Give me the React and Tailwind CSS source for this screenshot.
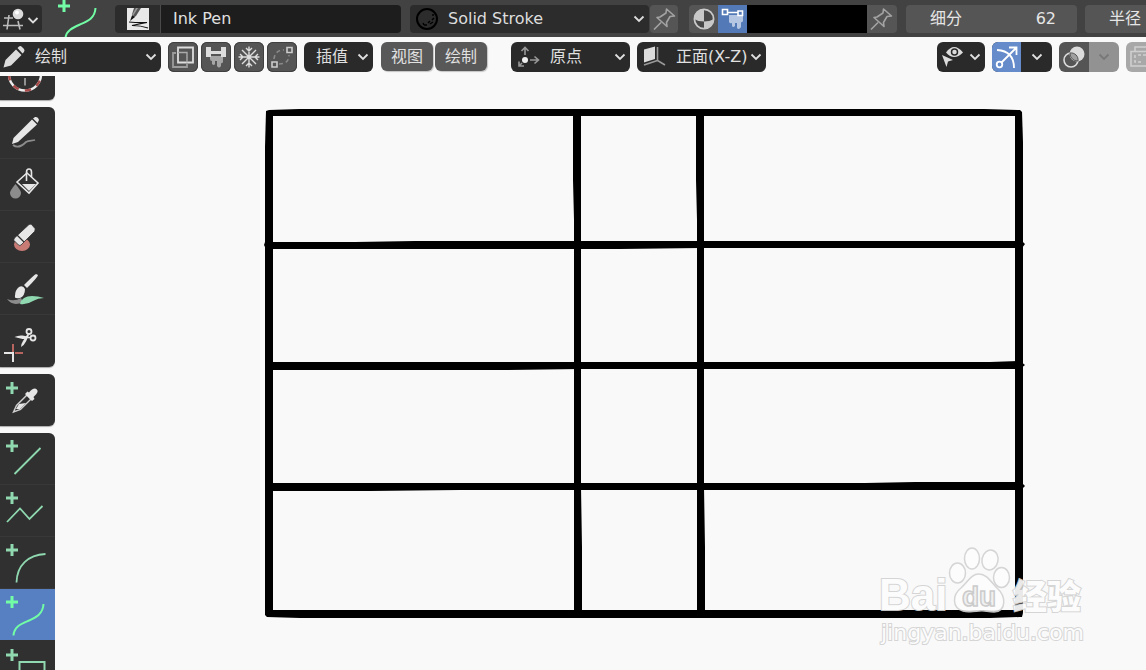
import { useState } from "react";

// SHARED ICONS

const Chevron = ({ className = "" }) => (
  <svg
    width="12"
    height="8"
    viewBox="0 0 12 8"
    fill="none"
    stroke="currentColor"
    strokeWidth="1.8"
    className={`shrink-0 pointer-events-none ${className}`}
  >
    <path d="M1.5 1.5 6 6l4.5-4.5" />
  </svg>
);

const Pin = () => (
  <svg width="28" height="28" viewBox="0 0 28 28" fill="none" stroke="#a3a3a3" strokeWidth="1.6" strokeLinejoin="round">
    <path d="M4 24.500l7-7M7 12.500l3-.5 6-4 .5-4 8 7-4.500.5-3.500 6 .5 4z" />
  </svg>
);

const Plus = () => <path d="M6 13h12M12 7v12" strokeWidth="3" />;

// TOOLBAR GROUPS

const toolGroups = [
  [
    {
      id: "cursor",
      label: "游标",
      art: (
        <g fill="none">
          <circle cx="25" cy="25.500" r="16" stroke="#eee" strokeWidth="2.400" />
          <circle cx="25" cy="25.500" r="16" stroke="#a84a4a" strokeWidth="2.400" strokeDasharray="6.280 6.280" strokeDashoffset="6.280" />
          <path d="M25 29v7.500" stroke="#aaa" strokeWidth="1.600" />
        </g>
      ),
    },
  ],
  [
    {
      id: "draw",
      label: "绘制",
      art: (
        <g>
          <path d="M12 37l1.500-6L32 12.500l5 5L18 35z" fill="#e6e6e6" />
          <path d="M33 11.500l2-1.500q3-.5 4 3l-1.500 3z" fill="#e6e6e6" />
          <path d="M13 38c5 4 10 0 13-3 3-2 6-1 9-2" fill="none" stroke="#8c8c8c" strokeWidth="1.800" />
        </g>
      ),
    },
    {
      id: "fill",
      label: "填充",
      art: (
        <g fill="none" stroke="#e6e6e6" strokeWidth="1.600">
          <path d="M17 23l10-9 11 10-9 10z" />
          <path d="M26.500 22V13q0-3 2.500-3t2.500 3v5" />
          <path d="M22 25h14l-7 7z" fill="#e6e6e6" stroke="none" />
          <path d="M15.500 25q5.500 6.500 5.500 9a5.500 5.500 0 0 1-11 0q0-2.500 5.500-9z" fill="#8c8c8c" stroke="none" />
        </g>
      ),
    },
    {
      id: "erase",
      label: "擦除",
      art: (
        <g>
          <ellipse cx="22" cy="33.500" rx="8" ry="6.500" fill="#c87b74" />
          <path d="M28.500 14q1.500-1.500 3-.5l3.500 4q.5 1.500-.5 3L21 34q-1 1-2.500 0L14 29.500q-.5-1.500.5-2.500z" fill="#e6e6e6" stroke="#303030" strokeWidth=".8" />
          <path d="M17 24l7 7" stroke="#303030" strokeWidth="1.300" />
        </g>
      ),
    },
    {
      id: "tint",
      label: "着色",
      art: (
        <g>
          <path d="M7 36q6 8 16 3l-2-4q-7 4-14 1z" fill="#8c8c8c" />
          <path d="M20 41q2-8 12-8 6 0 12 2-6 0-11 3-6 4-13 3z" fill="#8fd8b0" />
          <path d="M36 11l2 1q0 2-11 13l-3-3q10-10 12-11z" fill="#e6e6e6" />
          <path d="M19 24q4-2 6 2 0 7-5 9-6 1-5-2 0-6 4-9z" fill="#e6e6e6" />
        </g>
      ),
    },
    {
      id: "cutter",
      label: "剪切",
      art: (
        <g fill="none" strokeWidth="2">
          <circle cx="29" cy="15.500" r="2.500" stroke="#e6e6e6" strokeWidth="1.800" />
          <circle cx="33" cy="22" r="2.500" stroke="#e6e6e6" strokeWidth="1.800" />
          <path d="M14.500 21q4-2 8-1.500l8 1.500v1l-8 1-8-2zM21 31q0-3 2-6l4.500-7 1.500 1-3 6.500q-2 4-5 5.500z" fill="#e6e6e6" />
          <path d="M13 28v8M15 37h8" stroke="#b9655f" />
          <path d="M4 37h10M13 37v9" stroke="#e6e6e6" />
        </g>
      ),
    },
  ],
  [
    {
      id: "eyedropper",
      label: "吸管",
      art: (
        <g stroke="#8fd8b0">
          <Plus />
          <path d="M13.500 37l3-6.500L27 20l4 4-10.500 10.500z" fill="none" stroke="#d0d0d0" strokeWidth="1.400" />
          <path d="M16 34l3-5 7-1-6 6z" fill="#e6e6e6" stroke="none" />
          <path d="M25 19l2.500-2.500 1.500 1q3-4 6-4 3 1 2.500 3.500-.5 2-4 5l1 2-2.500 2z" fill="#e6e6e6" stroke="none" />
        </g>
      ),
    },
  ],
  [
    {
      id: "line",
      label: "直线",
      art: (
        <g fill="none" stroke="#8fd8b0" strokeWidth="1.800">
          <Plus />
          <path d="M14.500 41L40.500 15" />
        </g>
      ),
    },
    {
      id: "polyline",
      label: "多段线",
      art: (
        <g fill="none" stroke="#8fd8b0" strokeWidth="1.800">
          <Plus />
          <path d="M7 37l13-13.500L29.500 34l13-13" />
        </g>
      ),
    },
    {
      id: "arc",
      label: "弧线",
      art: (
        <g fill="none" stroke="#8fd8b0" strokeWidth="1.800">
          <Plus />
          <path d="M16.500 45.500C17 28 28 18 45.500 17" />
        </g>
      ),
    },
    {
      id: "curve",
      label: "曲线",
      art: (
        <g fill="none" stroke="#72fca5" strokeWidth="2">
          <Plus />
          <path d="M13.500 46.500C14 38 20 35.500 28 32S43 25 43.500 15" />
        </g>
      ),
    },
    {
      id: "box",
      label: "方框",
      art: (
        <g fill="none" stroke="#8fd8b0" strokeWidth="2">
          <Plus />
          <path d="M19.500 20h25v20h-25z" />
        </g>
      ),
    },
  ],
];

// TOP BAR (BRUSH + MATERIAL SETTINGS)

const TopBar = () => (
  <div className="flex h-[37px] shrink-0 items-center overflow-hidden bg-[#424242]">
    <button aria-label="编辑器类型" className="h-7 w-[42px] shrink-0 rounded-r bg-[#2c2c2c]">
      <svg width="42" height="28" viewBox="0 0 42 28" fill="none">
        <path d="M4 13h9M3 20.500h20M9 10L7 24.500M18 16l2 8.500" stroke="#bbb" strokeWidth="1.600" />
        <circle cx="18" cy="9" r="5.300" fill="#dcdcdc" />
        <circle cx="17" cy="7.500" r="2" fill="#fff" />
        <path d="M28.500 13l4.500 4.500 4.500-4.500" stroke="#ddd" strokeWidth="1.800" />
      </svg>
    </button>

    <svg width="40" height="37" viewBox="0 0 40 37" fill="none" stroke="#72fca5" className="ml-4 mr-[17px] shrink-0">
      <path d="M0 6h12M6 0v12" strokeWidth="3" />
      <path d="M7.500 38C8 31 14 28 22 24.500S37 18 37.500 8" strokeWidth="2" />
    </svg>

    <div className="flex h-7 shrink-0 overflow-hidden rounded">
      <button aria-label="笔刷" className="flex w-[46px] items-center justify-center border-r border-[#4a4a4a] bg-[#2c2c2c]">
        <svg width="22" height="22" viewBox="0 0 22 22">
          <path fill="#e9e9e9" d="M0 0h22v22H0z" />
          <path d="M7 0h7L9 8l-4 2.500 0-4z" fill="#555" />
          <path d="M9 0h2L6 8l-1-1z" fill="#999" />
          <path d="M3 13l2-5.500L8 9z" fill="#111" />
          <path d="M2 14q9 1 18 .5Q12 16 5 17.500q9 0 16 2.500" fill="none" stroke="#111" strokeWidth="1.200" />
        </svg>
      </button>
      <input
        aria-label="笔刷名称"
        defaultValue="Ink Pen"
        className="w-[240px] bg-[#1d1d1d] pl-3 text-[#e0e0e0] outline-none"
      />
    </div>

    <label className="ml-[9px] flex h-7 w-[239px] shrink-0 items-center rounded bg-[#2c2c2c] pl-1.5 pr-1 text-[#ddd]">
      <svg width="22" height="22" viewBox="0 0 22 22" fill="none" stroke="#000" className="shrink-0">
        <circle cx="11" cy="11" r="10" strokeWidth="2" />
        <path d="M17 6v2M18 10l-2 2M14 13l-2 2M17 14l-3 2M11 17l-3 0M7 15l1 2" strokeWidth="1.500" />
      </svg>
      <select aria-label="材质" className="ml-[10px] min-w-0 flex-1 appearance-none bg-transparent outline-none">
        <option>Solid Stroke</option>
      </select>
      <Chevron />
    </label>
    <button aria-label="固定材质" className="ml-px h-7 w-7 shrink-0 rounded bg-[#555]">
      <Pin />
    </button>

    <div className="ml-[11px] flex h-7 shrink-0 overflow-hidden rounded">
      <button aria-label="材质颜色" className="flex w-[29px] items-center justify-center bg-[#555]">
        <svg width="22" height="22" viewBox="0 0 22 22">
          <circle cx="11" cy="11" r="9.600" fill="#484848" stroke="#c8c8c8" strokeWidth="1.800" />
          <path d="M11 1v12.500Q5 13.500 1 11A10 10 0 0 1 11 1z" fill="#c8c8c8" />
          <path d="M11 13.500q5.500 0 10-2.500A10 10 0 0 1 11 21z" fill="#c8c8c8" />
        </svg>
      </button>
      <button aria-label="顶点色" className="w-[29px] bg-[#537ab6]">
        <svg width="29" height="28" viewBox="0 0 29 28" fill="none">
          <path d="M11 10h14v6q-1 2-2 1v5q-2 3.500-4 1v-5h-2v3q-2 2-3 0v-3q-2 1-3-1z" fill="#b5c6e2" />
          <path d="M9 7.500h11" stroke="#fff" strokeWidth="1.600" />
          <path d="M4.500 4.500h5v5h-5zM20 6h4.500v4.500H20z" fill="#537ab6" stroke="#fff" strokeWidth="1.600" />
        </svg>
      </button>
      <button aria-label="颜色" className="w-[120px] bg-black" />
      <button aria-label="固定颜色" className="w-[30px] bg-[#555]">
        <Pin />
      </button>
    </div>

    <label className="ml-[9px] flex h-7 w-[171px] shrink-0 items-center rounded bg-[#555] pl-6 pr-[21px] text-[#e6e6e6]">
      <span className="shrink-0">细分</span>
      <input defaultValue="62" className="min-w-0 flex-1 bg-transparent text-right outline-none" />
    </label>
    <button className="ml-2 h-7 min-w-[61px] flex-1 whitespace-nowrap rounded-l bg-[#555] pl-6 text-left text-[#e6e6e6]">
      半径
    </button>
  </div>
);

// VIEWPORT HEADER

const squareIcons = [
  {
    label: "多帧",
    art: (
      <g fill="none" strokeWidth="1.800">
        <path d="M8 11H5v14h14v-3" stroke="#9c9c9c" />
        <path d="M10 5.500h15v15H10z" stroke="#ddd" />
        <path d="M10 10.500h9v10" stroke="#aaa" strokeWidth="1.400" />
      </g>
    ),
  },
  {
    label: "叠加绘制",
    art: (
      <g>
        <path d="M9 14h13v6q-1 2-2 1v3q-2 3-4 0v-5h-2v3q-1 2-3 0v-3q-2 0-2-2z" fill="#a6a6a6" />
        <path d="M5 5h5v4h10V5h5v10h-5v-3H10v3H5z" fill="#ddd" />
      </g>
    ),
  },
  {
    label: "自动附加权重",
    art: (
      <path
        d="M15 4.500v21M4.500 15h21M8 8l14 14M22 8L8 22M12 6l3 3 3-3M12 24l3-3 3 3M6 12l3 3-3 3M24 12l-3 3 3 3"
        fill="none"
        stroke="#ddd"
        strokeWidth="1.400"
      />
    ),
  },
  {
    label: "使用引导",
    art: (
      <g fill="none" strokeWidth="1.600">
        <path d="M20 5.500h5v5h-5zM5 20h5v5H5z" stroke="#ccc" />
        <path d="M7 17Q8 8 17 8M12 22q10 0 10-9" stroke="#898989" strokeDasharray="4 3" />
      </g>
    ),
  },
];

const HeaderSelect = ({ label, value, icon, className }) => (
  <label className={`flex h-[30px] shrink-0 items-center bg-[#2a2a2a] pr-1 text-[#e0e0e0] ${className}`}>
    {icon}
    <select aria-label={label} className="min-w-0 flex-1 appearance-none bg-transparent outline-none">
      <option>{value}</option>
    </select>
    <Chevron />
  </label>
);

const ViewHeader = () => (
  <div className="flex h-[39px] shrink-0 items-center overflow-hidden bg-[#f9f9f9] pb-px pt-px">
    <HeaderSelect
      label="模式"
      value="绘制"
      className="w-[161px] rounded-r-md"
      icon={
        <svg width="24" height="24" viewBox="0 0 24 24" fill="#dcdcdc" className="ml-[2px] mr-[9px] shrink-0">
          <path d="M1.500 22.500L3.500 15 14 4.500l5.500 5.500L9 20.500zM15.500 3l1.500-1.500q1.500-1 3 .5L22 4q1 1.500 0 3l-1.500 1.500z" />
        </svg>
      }
    />

    <div className="ml-[7px] flex shrink-0 gap-[3px]">
      {squareIcons.map((item) => (
        <button key={item.label} aria-label={item.label} className="h-[30px] w-[30px] rounded-md bg-[#555] ring-1 ring-inset ring-[#404040]">
          <svg width="30" height="30" viewBox="0 0 30 30">
            {item.art}
          </svg>
        </button>
      ))}
    </div>

    <button className="ml-[7px] flex h-[30px] w-[69px] shrink-0 items-center justify-between rounded-md bg-[#2a2a2a] pl-3 pr-1 text-[#e0e0e0]">
      插值
      <Chevron />
    </button>

    <div className="ml-2 flex shrink-0 gap-[2px] text-[#e0e0e0]">
      <button className="h-[29px] w-[52px] rounded-md bg-[#585858] shadow-[1px_1px_1px_#c4c4c4]">视图</button>
      <button className="h-[29px] w-[52px] rounded-md bg-[#585858] shadow-[1px_1px_1px_#c4c4c4]">绘制</button>
    </div>

    <HeaderSelect
      label="笔画位置"
      value="原点"
      className="ml-6 w-[119px] rounded-md"
      icon={
        <svg width="39" height="30" viewBox="0 0 39 30" fill="none" stroke="#999" strokeWidth="1.600" className="shrink-0">
          <path d="M14 13V6M10.500 9L14 5.500 17.500 9M19 18h8M23.500 14.500L27.500 18l-4 3.500M11 21l-3 3M8 19.500V24h5" />
          <circle cx="14" cy="18" r="3" fill="#eee" stroke="none" />
        </svg>
      }
    />
    <HeaderSelect
      label="绘制平面"
      value="正面(X-Z)"
      className="ml-[7px] w-[129px] rounded-md"
      icon={
        <svg width="39" height="30" viewBox="0 0 39 30" fill="none" className="shrink-0">
          <path d="M7 7.500l11-3V17L7 20.500z" fill="#dcdcdc" />
          <path d="M20.500 5v13.500L28 23M20.500 18.500L7 23" stroke="#999" strokeWidth="1.600" />
        </svg>
      }
    />

    <div className="ml-auto flex shrink-0 gap-[7px] pl-4">
      <button aria-label="可见性" className="flex h-[30px] w-12 items-center justify-between rounded-md bg-[#2a2a2a] pr-1 text-[#e0e0e0]">
        <svg width="30" height="30" viewBox="0 0 30 30">
          <path d="M9 10.500q8-11 17 0-9 9-17 0z" fill="#dcdcdc" />
          <circle cx="17.500" cy="10" r="3" fill="#dcdcdc" stroke="#2a2a2a" strokeWidth="1.500" />
          <path d="M5 13l11 5-5 1.500L9.500 25z" fill="#dcdcdc" />
        </svg>
        <Chevron />
      </button>

      <div className="flex h-[30px] overflow-hidden rounded-md bg-[#2a2a2a] text-[#e0e0e0]">
        <button aria-label="显示操纵件" className="w-[29px] bg-[#658bcb]">
          <svg width="29" height="30" viewBox="0 0 29 30" fill="none" stroke="#fff" strokeWidth="1.800">
            <path d="M5 8q17 1 17 18M9.500 20.500L24 6M17 5.500h7.500V13" />
            <circle cx="7.500" cy="22.500" r="2.800" />
          </svg>
        </button>
        <button aria-label="操纵件选项" className="flex w-[31px] items-center justify-center">
          <Chevron />
        </button>
      </div>

      <div className="flex h-[30px] overflow-hidden rounded-md">
        <button aria-label="显示叠加层" className="w-[30px] bg-[#555]">
          <svg width="30" height="30" viewBox="0 0 30 30">
            <circle cx="18" cy="12" r="7.500" fill="#dcdcdc" />
            <circle cx="12" cy="18" r="7" fill="none" stroke="#dcdcdc" strokeWidth="1.600" />
            <path d="M11 11a7 7 0 0 1 8 8 7.500 7.500 0 0 1-8-8z" fill="#a0a0a0" stroke="#555" strokeWidth="1" />
          </svg>
        </button>
        <button aria-label="叠加层选项" className="flex w-[30px] items-center justify-center bg-[#929292] text-[#787878]">
          <Chevron />
        </button>
      </div>

      <button aria-label="透视模式" className="h-[30px] w-5 overflow-hidden rounded-l-md bg-[#a8a8a8]">
        <svg width="30" height="30" viewBox="0 0 30 30" fill="none" stroke="#cfcfcf" strokeWidth="1.600">
          <path d="M9 9V5h16M5 9.500h18V24H5z" />
          <path d="M9 13v7h8M12 13h8" strokeDasharray="3 2" />
        </svg>
      </button>
    </div>
  </div>
);

// LEFT TOOLBAR

const Toolbar = ({ active, onPick }) => (
  <div className="w-[55px] shrink-0 overflow-hidden">
    {/* scrolled down by half a tool */}
    <div className="-mt-7 flex flex-col gap-[7px]">
      {toolGroups.map((group) => (
        <div key={group[0].id} className="overflow-hidden rounded-r-md bg-[#303030] shadow-[0_1px_1px_#aaa]">
          {group.map((tool) => (
            <button
              key={tool.id}
              aria-label={tool.label}
              onClick={() => onPick(tool.id)}
              className={`block h-[52px] w-full border-b last:border-b-0 ${
                active === tool.id ? "border-[#303030] bg-[#5680c2]" : "border-[#383838]"
              }`}
            >
              <svg width="55" height="51" viewBox="0 0 55 51">
                {tool.art}
              </svg>
            </button>
          ))}
        </div>
      ))}
    </div>
  </div>
);

// WATERMARK

const Watermark = () => (
  <svg
    width="220"
    height="110"
    viewBox="870 540 220 110"
    className="absolute bottom-5 right-14"
    fill="#fdfdfd"
    stroke="#d2d2d2"
    strokeWidth="1.500"
    opacity=".92"
  >
    <g className="[paint-order:stroke]" strokeWidth="2">
      <text x="879" y="610" className="font-['Liberation_Sans',sans-serif] text-[44px] font-bold">Bai</text>
      <text x="1013" y="609" className="font-['Noto_Sans_CJK_SC',sans-serif] text-[34px] font-black">经验</text>
      <text x="881" y="640" className="font-['DejaVu_Sans',sans-serif] text-[22px]">jingyan.baidu.com</text>
    </g>
    <ellipse cx="957.500" cy="573" rx="8" ry="10" />
    <ellipse cx="972" cy="558.500" rx="7.500" ry="10.500" />
    <ellipse cx="990" cy="560" rx="8" ry="10" transform="rotate(12 990 560)" />
    <ellipse cx="1001.500" cy="577.500" rx="8" ry="10" />
    <path d="M979 574c8 0 12 8 18 14 9 8 10 23-3 24-7 0-9-2-15-1-7 0-10 2-16 0-11-3-11-16-2-23 7-6 10-14 18-14z" />
    <text x="962" y="606" className="font-['Liberation_Sans',sans-serif] text-[28px] font-bold" fill="#f0f0f0" stroke="#c8c8c8">du</text>
  </svg>
);

// CANVAS

const Canvas = () => (
  <div className="relative min-w-0 flex-1 overflow-hidden">
    <svg viewBox="55 76 1091 594" preserveAspectRatio="xMinYMin meet" className="h-full w-full">
      {/* frame */}
      <path d="M266 111l3-1 30-1h685l36 1 2 2v4H266z" />
      <path d="M266 111h7v506h-6l-2-2V147z" />
      <path d="M1015 112h7l1 30v470l-1 5h-7z" />
      <path d="M266 610h757l-1 6-2 1-30 1H300l-33-1z" />
      {/* rows */}
      <path d="M265 242h90l60-1h607l3 3-3 4H700l-80 1H266l-2-4z" />
      <path d="M265 362h725l30-1 5 4-5 4H580l-80 1H266z" />
      <path d="M265 483h600l50-1h106l4 4-4 4H460l-90 1H266z" />
      {/* columns */}
      <path d="M573 112h8v375l1 60v66h-8V220l-1-40z" />
      <path d="M696 112h8v375l1 60v66h-8V220l-1-40z" />
    </svg>
    <Watermark />
  </div>
);

const App = () => {
  const [tool, setTool] = useState("curve");

  return (
    <div className="flex h-screen flex-col overflow-hidden bg-[#f9f9f9] font-['DejaVu_Sans','Noto_Sans_CJK_SC',sans-serif] text-base">
      <TopBar />
      <ViewHeader />
      <div className="flex min-h-0 flex-1">
        <Toolbar active={tool} onPick={setTool} />
        <Canvas />
      </div>
    </div>
  );
};

export default App;
